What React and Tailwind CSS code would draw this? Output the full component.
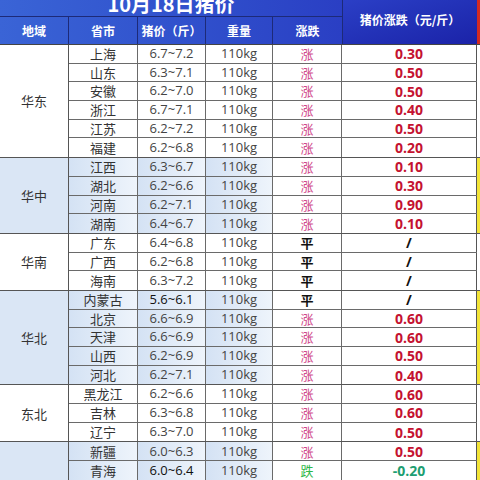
import React from "react";

const groups = [
  {
    name: "华东",
    blue: false,
    rows: [
      ["上海", "6.7~7.2", "涨", "0.30"],
      ["山东", "6.3~7.1", "涨", "0.50"],
      ["安徽", "6.2~7.0", "涨", "0.50"],
      ["浙江", "6.7~7.1", "涨", "0.40"],
      ["江苏", "6.2~7.2", "涨", "0.50"],
      ["福建", "6.2~6.8", "涨", "0.20"],
    ],
  },
  {
    name: "华中",
    blue: true,
    rows: [
      ["江西", "6.3~6.7", "涨", "0.10"],
      ["湖北", "6.2~6.6", "涨", "0.30"],
      ["河南", "6.2~7.1", "涨", "0.90"],
      ["湖南", "6.4~6.7", "涨", "0.10"],
    ],
  },
  {
    name: "华南",
    blue: false,
    rows: [
      ["广东", "6.4~6.8", "平", "/"],
      ["广西", "6.2~6.8", "平", "/"],
      ["海南", "6.3~7.2", "平", "/"],
    ],
  },
  {
    name: "华北",
    blue: true,
    rows: [
      ["内蒙古", "5.6~6.1", "平", "/"],
      ["北京", "6.6~6.9", "涨", "0.60"],
      ["天津", "6.6~6.9", "涨", "0.60"],
      ["山西", "6.2~6.9", "涨", "0.50"],
      ["河北", "6.2~7.1", "涨", "0.40"],
    ],
  },
  {
    name: "东北",
    blue: false,
    rows: [
      ["黑龙江", "6.2~6.6", "涨", "0.60"],
      ["吉林", "6.3~6.8", "涨", "0.60"],
      ["辽宁", "6.3~7.0", "涨", "0.50"],
    ],
  },
  {
    name: "",
    blue: true,
    rows: [
      ["新疆", "6.0~6.3", "涨", "0.50"],
      ["青海", "6.0~6.4", "跌", "-0.20"],
    ],
  },
];

const cjkFont = "font-['Noto_Sans_CJK_SC','Noto_Sans',sans-serif]";
const numFont = "font-['Open_Sans','Noto_Sans_CJK_SC',sans-serif]";

function TrendCell({ t }) {
  if (t === "涨")
    return <span className={`text-[#d0488a] text-[13px] ${cjkFont}`}>涨</span>;
  if (t === "跌")
    return <span className={`text-[#2fb84a] text-[13px] ${cjkFont}`}>跌</span>;
  return <span className={`text-[#111] text-[13px] font-bold ${cjkFont}`}>平</span>;
}

function ValueCell({ t, v }) {
  if (v === "/")
    return <span className={`text-[#111] text-[14px] font-bold ${numFont}`}>/</span>;
  if (t === "跌")
    return <span className={`text-[#1e9e72] text-[14px] font-bold ${numFont}`}>{v}</span>;
  return <span className={`text-[#c41230] text-[14px] font-bold ${numFont}`}>{v}</span>;
}

function Row({ r, blue }) {
  const blueBg = blue ? "bg-gradient-to-r from-[#d4e2f4] to-[#eef4fb]" : "bg-white";
  const dark = r[0] === "内蒙古" || r[0] === "青海";
  return (
    <div className="flex h-[18.7px] border-b border-[#6a6a6a] last:border-b-0">
      <div className={`w-[69px] border-r border-[#6a6a6a] flex items-center justify-center text-[13px] text-[#333] ${cjkFont} ${blueBg}`}>
        {r[0]}
      </div>
      <div className={`w-[68px] border-r border-[#6a6a6a] flex items-center justify-center text-[13px] ${numFont} ${dark ? "text-[#111]" : "text-[#444]"} ${blueBg}`}>
        {r[1]}
      </div>
      <div className={`w-[67px] border-r border-[#6a6a6a] flex items-center justify-center text-[13px] text-[#444] ${numFont} ${blueBg}`}>
        110kg
      </div>
      <div className="w-[69px] border-r border-[#6a6a6a] flex items-center justify-center bg-white">
        <TrendCell t={r[2]} />
      </div>
      <div className="w-[135px] border-r border-[#555] flex items-center justify-center bg-white">
        <ValueCell t={r[2]} v={r[3]} />
      </div>
    </div>
  );
}

const headWidths = ["w-[69px]", "w-[69px]", "w-[68px]", "w-[67px]", "w-[69px]"];

export default function App() {
  return (
    <div className={`w-[480px] h-[480px] overflow-hidden bg-white ${cjkFont}`}>
      {/* header */}
      <div className="flex h-[45px] border-b border-[#444]">
        <div className="w-[342px] flex flex-col bg-gradient-to-r from-[#3a64d6] to-[#2a3fc4]">
          <div className="h-[17px] overflow-hidden flex items-end justify-center border-b border-[#1d2a78]">
            <span className={`text-white text-[20px] font-bold leading-[20px] mb-[2px] ${cjkFont}`}>
              10月18日猪价
            </span>
          </div>
          <div className="flex flex-1">
            {["地域", "省市", "猪价（斤）", "重量", "涨跌"].map((h, i) => (
              <div
                key={h}
                className={`${headWidths[i]} ${i < 4 ? "border-r border-[#1d2a78]" : ""} flex items-center justify-center text-white text-[12px] font-bold ${cjkFont}`}
              >
                {h}
              </div>
            ))}
          </div>
        </div>
        <div className={`w-[135px] border-l border-[#1d2a78] flex items-center justify-center pb-[5px] bg-gradient-to-br from-[#2b3fc6] to-[#1b22a8] text-white text-[12px] font-bold ${cjkFont}`}>
          猪价涨跌（元/斤）
        </div>
        <div className="w-[3px] bg-[#d42a22]" />
      </div>
      {/* body */}
      {groups.map((g, gi) => (
        <div key={gi} className="flex border-b border-[#555]">
          <div className={`w-[69px] border-r border-[#555] flex items-center justify-center text-[13px] text-[#333] ${cjkFont} ${g.blue ? "bg-[#dae6f5]" : "bg-white"}`}>
            {g.name}
          </div>
          <div className="flex flex-col">
            {g.rows.map((r) => (
              <Row key={r[0]} r={r} blue={g.blue} />
            ))}
          </div>
          <div className={`w-[3px] ${g.blue ? "bg-[#f2e437]" : "bg-white"}`} />
        </div>
      ))}
    </div>
  );
}
